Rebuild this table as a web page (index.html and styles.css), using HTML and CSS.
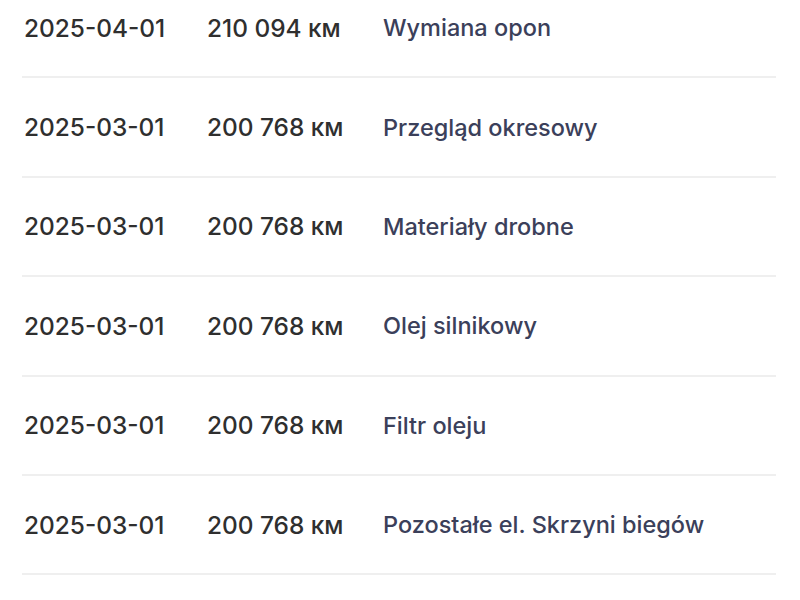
FILE: index.html
```html
<!DOCTYPE html>
<html lang="pl">
<head>
<meta charset="utf-8">
<link rel="stylesheet" href="styles.css">
</head>
<body>
<ul class="history">
  <li class="row"><span class="date">2025-04-01</span><span class="km">210 094 км</span><span class="desc">Wymiana opon</span></li>
  <li class="row"><span class="date">2025-03-01</span><span class="km">200 768 км</span><span class="desc">Przegląd okresowy</span></li>
  <li class="row"><span class="date">2025-03-01</span><span class="km">200 768 км</span><span class="desc">Materiały drobne</span></li>
  <li class="row"><span class="date">2025-03-01</span><span class="km">200 768 км</span><span class="desc">Olej silnikowy</span></li>
  <li class="row"><span class="date">2025-03-01</span><span class="km">200 768 км</span><span class="desc">Filtr oleju</span></li>
  <li class="row"><span class="date">2025-03-01</span><span class="km">200 768 км</span><span class="desc">Pozostałe el. Skrzyni biegów</span></li>
</ul>
</body>
</html>
```
FILE: styles.css
```css
html, body {
  margin: 0;
  padding: 0;
  background: #ffffff;
  overflow: hidden;
}
body {
  font-family: Inter, "Noto Sans", sans-serif;
  font-size: 23.5px;
}
.history {
  list-style: none;
  margin: -21px 24px 0 22px;
  padding: 0;
}
.row {
  display: flex;
  align-items: center;
  height: 97.4px;
  border-bottom: 2px solid #efefef;
  padding-left: 2px;
}
.date {
  width: 183px;
  color: #2f2f2f;
  font-size: 24.4px;
  font-weight: 500;
}
.km {
  width: 176px;
  color: #2f2f2f;
  font-size: 24.4px;
  font-weight: 500;
}
.desc {
  color: #3b405a;
  font-weight: 500;
}
```
